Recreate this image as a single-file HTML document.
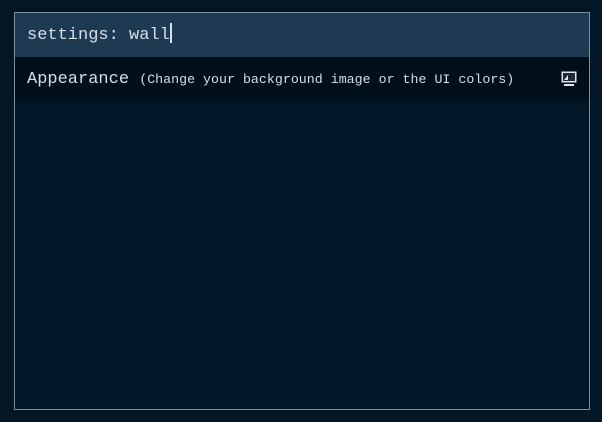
<!DOCTYPE html>
<html><head><meta charset="utf-8"><style>
html,body{margin:0;padding:0;width:602px;height:422px;background:#041523;overflow:hidden}
.box{position:absolute;left:14px;top:12px;width:574px;height:396px;border:1px solid #7f8ea0;background:#011627}
.hdr{position:absolute;left:0;top:0;width:574px;height:44px;background:#1e3a52;color:#d6deeb;font:17px "Liberation Mono",monospace;line-height:44px;padding:1px 0 0 12px;box-sizing:border-box}
.cur{display:inline-block;width:2px;height:20px;background:#d6deeb;vertical-align:middle;margin-top:-3px}
.row{position:absolute;left:0;top:44px;width:574px;height:44px;background:#010f1a;color:#d6deeb;padding:1px 0 0 12px;box-sizing:border-box;font:17px "Liberation Mono",monospace;line-height:43px}
.row small{font-size:13.3px}
.ic{position:absolute;left:546px;top:14px}
</style></head><body>
<div class="box">
<div class="hdr">settings: wall<span class="cur"></span></div>
<div class="row">Appearance <small>(Change your background image or the UI colors)</small>
<svg class="ic" width="16" height="16" viewBox="0 0 16 16"><rect x="0.5" y="0.5" width="15" height="11" fill="#e0e6ee"/><rect x="2" y="2" width="12" height="8" fill="#1e2a36"/><path d="M3 9h4V4L3 9z" fill="#e0e6ee"/><rect x="3" y="13" width="10" height="2" fill="#e0e6ee"/></svg>
</div>
</div>
</body></html>
